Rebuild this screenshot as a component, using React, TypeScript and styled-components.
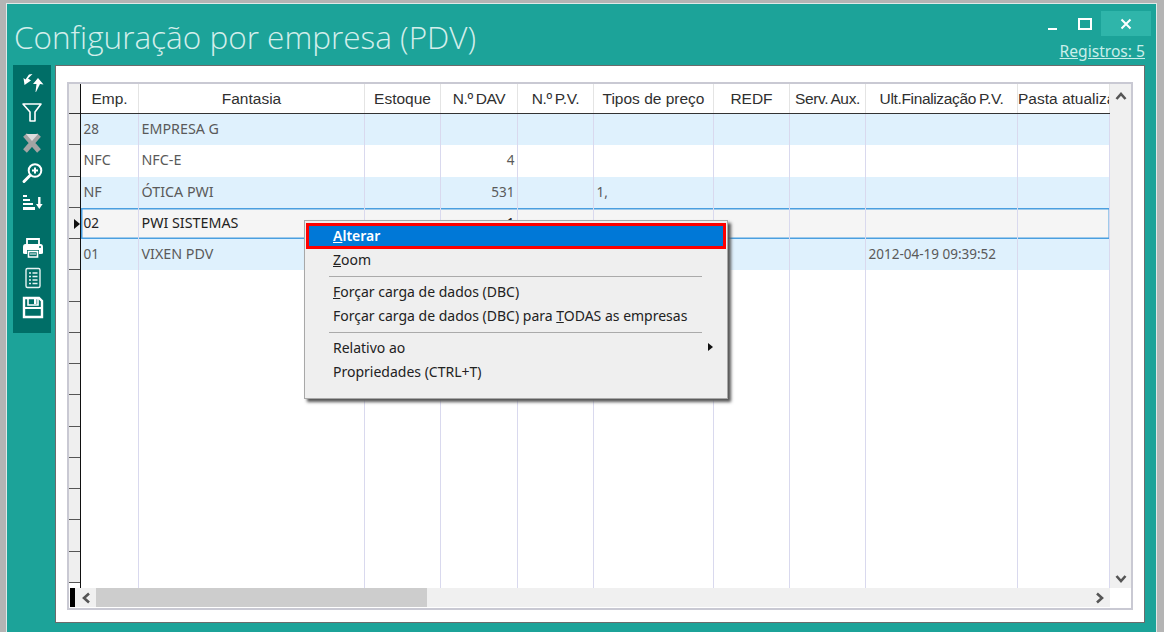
import * as React from 'react'
import styled, {createGlobalStyle} from 'styled-components'

const GlobalStyle = createGlobalStyle`
  html, body {
    margin: 0;
    padding: 0;
    background: #b4b4b4;
    overflow: hidden;
  }
`

const Page = styled.div`
  position: relative;
  width: 1164px;
  height: 632px;
  padding: 3px 0 0 6px;
  box-sizing: border-box;
  font-family: 'Noto Sans', sans-serif;
`

const Window = styled.div`
  width: 1151px;
  height: 629px;
  box-sizing: border-box;
  background: #1ca399;
  border: 1px solid #dfe9e8;
  border-bottom: 0;
  display: flex;
  flex-direction: column;
`

const TitleBar = styled.div`
  height: 61px;
  display: flex;
  justify-content: space-between;
`

const Title = styled.h1`
  margin: 11px 0 0 7px;
  font-family: 'Open Sans', sans-serif;
  font-weight: 300;
  font-size: 31.5px;
  line-height: 44px;
  color: #d3eeeb;
  white-space: nowrap;
`

const TitleRight = styled.div`
  display: flex;
  flex-direction: column;
  align-items: flex-end;
  padding: 7px 5px 0 0;
`

const WindowControls = styled.div`
  display: flex;
  align-items: center;
  height: 25px;
`

const WinButton = styled.div<{$close?: boolean}>`
  width: ${p => (p.$close ? '50px' : '32px')};
  height: 25px;
  display: flex;
  align-items: center;
  justify-content: center;
  background: ${p => (p.$close ? '#2fb5aa' : 'transparent')};
`

const RecordsLink = styled.a`
  margin: 5px 6px 0 0;
  font-size: 15.6px;
  line-height: 20px;
  color: #c9eeea;
  text-decoration: underline;
`

const Body = styled.div`
  display: flex;
  align-items: flex-start;
  padding-left: 6px;
  gap: 4px;
`

const Toolbar = styled.div`
  width: 38px;
  height: 268px;
  background: #006e67;
  display: flex;
  flex-direction: column;
  align-items: center;
  padding-top: 3px;
  box-sizing: border-box;
`

const ToolButton = styled.div<{$gap?: boolean}>`
  width: 38px;
  height: 30px;
  flex: none;
  margin-top: ${p => (p.$gap ? '15px' : '0')};
  display: flex;
  align-items: center;
  justify-content: center;
`

const Panel = styled.div`
  width: 1090px;
  height: 558px;
  box-sizing: border-box;
  background: #fff;
  border: 1px solid #6b6b6b;
  padding: 16px 11px 12px;
`

const GridBox = styled.div`
  height: 528px;
  box-sizing: border-box;
  border: 2px solid #c9c9d3;
  display: flex;
  flex-direction: column;
  background: #fff;
`

const GridMain = styled.div`
  flex: none;
  height: 504px;
  display: flex;
  overflow: hidden;
`

const Indicators = styled.div`
  width: 12px;
  flex: none;
  box-sizing: border-box;
  border-right: 1.5px solid #111;
  display: flex;
  flex-direction: column;
`

const IndicatorHead = styled.div`
  height: 30px;
  flex: none;
  box-sizing: border-box;
  background: #efefef;
  border-bottom: 1px solid #333;
`

const IndicatorCell = styled.div<{$current?: boolean}>`
  height: 31.27px;
  flex: none;
  box-sizing: border-box;
  background: #efefef;
  border-bottom: 1px solid #555;
  position: relative;
  ${p =>
    p.$current &&
    `&::after {
      content: '';
      position: absolute;
      right: 0;
      top: 11px;
      border-left: 6px solid #111;
      border-top: 5px solid transparent;
      border-bottom: 5px solid transparent;
    }`}
`

const DataArea = styled.div`
  width: 1029px;
  flex: none;
  overflow: hidden;
`

const columns = '58px 226px 76px 77px 76px 120px 76px 76px 152px 92px'

const HeaderRow = styled.div`
  height: 30px;
  box-sizing: border-box;
  display: grid;
  grid-template-columns: ${columns};
  border-bottom: 1px solid #333;
`

const HeaderCell = styled.div<{$tight?: boolean}>`
  box-sizing: border-box;
  border-right: 1px solid #e4e4e4;
  font-family: 'Liberation Sans', sans-serif;
  font-size: 15.5px;
  line-height: 29px;
  color: #2f2f2f;
  text-align: center;
  white-space: nowrap;
  overflow: hidden;
  ${p => p.$tight && 'letter-spacing: -0.35px; word-spacing: -1px;'}
`

const Row = styled.div<{$alt?: boolean; $selected?: boolean}>`
  height: 31.27px;
  box-sizing: border-box;
  display: grid;
  grid-template-columns: ${columns};
  background: ${p => (p.$selected ? '#f5f5f5' : p.$alt ? '#dff1fd' : '#fff')};
  color: ${p => (p.$selected ? '#222' : '#5a5a5a')};
  ${p => p.$selected && 'box-shadow: inset 0 0 0 1.5px #4a9fe0;'}
`

const Cell = styled.div<{$right?: boolean; $numeric?: boolean}>`
  box-sizing: border-box;
  border-right: 1px solid #d9d9ee;
  padding: 0 2.5px;
  font-size: ${p => (p.$numeric ? '13.5px' : '14.3px')};
  line-height: 30px;
  text-align: ${p => (p.$right ? 'right' : 'left')};
  white-space: nowrap;
  overflow: hidden;
`

const VScroll = styled.div`
  width: 21px;
  flex: none;
  background: #f0f0f0;
  display: flex;
  flex-direction: column;
  justify-content: space-between;
  align-items: center;
  padding: 7px 0 4px;
  box-sizing: border-box;
`

const HScrollRow = styled.div`
  height: 20px;
  flex: none;
  display: flex;
`

const Blocker = styled.div`
  width: 6px;
  flex: none;
  background: #fff;
  padding: 0 1px;
  box-sizing: border-box;
  &::before {
    content: '';
    display: block;
    width: 5px;
    height: 19px;
    background: #000;
  }
`

const HTrack = styled.div`
  flex: 1;
  height: 19px;
  background: #f0f0f0;
  display: flex;
  align-items: center;
`

const ArrowBtn = styled.div`
  width: 21px;
  flex: none;
  display: flex;
  justify-content: center;
`

const Thumb = styled.div`
  width: 331px;
  height: 19px;
  background: #cdcdcd;
`

const Spacer = styled.div`
  flex: 1;
`

const Corner = styled.div`
  width: 21px;
  flex: none;
  background: #fff;
`

const Menu = styled.div`
  position: absolute;
  left: 304px;
  top: 220px;
  width: 424px;
  height: 179px;
  box-sizing: border-box;
  background: #efefef;
  border: 1px solid #a8a8a8;
  box-shadow: 3px 3px 3px #555;
  padding-top: 3px;
  font-size: 14px;
  color: #222;
`

const MenuItem = styled.div<{$active?: boolean}>`
  height: 24px;
  line-height: 24px;
  margin: 0 2px;
  padding-left: 26px;
  position: relative;
  white-space: nowrap;
  ${p =>
    p.$active &&
    `background: #0078d7;
     color: #fff;
     font-weight: 600;
     box-shadow: 0 0 0 1px #f00, inset 0 0 0 2px #f00;`}
`

const MenuSep = styled.div`
  height: 1px;
  margin: 3.5px 25px 3.5px 24px;
  background: #aaa;
`

const SubArrow = styled.span`
  position: absolute;
  right: 12px;
  top: 7px;
  border-left: 5px solid #111;
  border-top: 4.5px solid transparent;
  border-bottom: 4.5px solid transparent;
`

const Chevron: React.FC<{d: string}> = ({d}) => (
  <svg width="12" height="10" viewBox="0 0 12 10">
    <path d={d} fill="none" stroke="#555" strokeWidth="2.6" />
  </svg>
)

const ico = {width: 24, height: 24, viewBox: '0 0 24 24'}

const RefreshIcon = () => (
  <svg {...ico}>
    <path d="M12.5 3 L8 7.5 L11 9.5 L4.5 14 L3.5 7 L5.5 8.5 L9 3.5 Z" fill="#fff" />
    <path d="M18 7 L23.5 13.5 L20 13 L16 21 L15.5 21 L16.5 13 L13 13 Z" fill="#fff" />
  </svg>
)

const FilterIcon = () => (
  <svg {...ico}>
    <path d="M3 3 H21 L15 11 V20 H10 V11 Z" fill="none" stroke="#fff" strokeWidth="1.6" strokeLinejoin="round" />
  </svg>
)

const ClearFilterIcon = () => (
  <svg {...ico}>
    <path d="M5 4 L19 20 M19 4 L5 20" stroke="#a4a4a4" strokeWidth="5" />
    <path d="M6 3 H18 L12 10 Z" fill="#dedede" />
  </svg>
)

const ZoomIcon = () => (
  <svg {...ico}>
    <circle cx="15" cy="9.5" r="6.3" fill="none" stroke="#fff" strokeWidth="2" />
    <path d="M12 9.5 H18 M15 6.5 V12.5" stroke="#fff" strokeWidth="2" />
    <path d="M10 14.5 L4 20.5" stroke="#fff" strokeWidth="3" strokeLinecap="round" />
  </svg>
)

const SortIcon = () => (
  <svg {...ico}>
    <path d="M3 4 H7 V6 H3 Z M3 8 H10 V10 H3 Z M3 12 H13 V14 H3 Z M3 16 H15 V19 H3 Z" fill="#fff" />
    <path d="M19.3 6 V14" stroke="#fff" strokeWidth="2.4" />
    <path d="M16 13 H22.6 L19.3 18 Z" fill="#fff" />
  </svg>
)

const PrintIcon = () => (
  <svg {...ico}>
    <path d="M7 9 V3 H19 V9 Z" fill="none" stroke="#fff" strokeWidth="1.8" />
    <path d="M5.5 8 H20.5 Q23 8 23 11 V17 Q23 18 21 18 H19 V14 H7 V18 H5 Q3 18 3 17 V11 Q3 8 5.5 8 Z" fill="#fff" />
    <path d="M8.5 15.5 H17.5 V21 H8.5 Z" fill="none" stroke="#fff" strokeWidth="1.6" />
    <path d="M10 18 H16" stroke="#fff" strokeWidth="1" />
    <circle cx="20" cy="11" r="1" fill="#006e67" />
  </svg>
)

const ListIcon = () => (
  <svg {...ico}>
    <rect x="6" y="2.5" width="14" height="19" rx="1.5" fill="none" stroke="#e6f4f3" strokeWidth="1.4" />
    <path d="M9 7 H11 M9 10.5 H11 M9 14 H11 M9 17.5 H11 M12.5 7 H17.5 M12.5 10.5 H17.5 M12.5 14 H17.5 M12.5 17.5 H17.5" stroke="#e6f4f3" strokeWidth="1.6" />
  </svg>
)

const SaveIcon = () => (
  <svg {...ico}>
    <path d="M4 2 H19 L22 5 V21 H4 Z" fill="none" stroke="#fff" strokeWidth="2.4" />
    <path d="M8 2 H18 V9 H8 Z" fill="none" stroke="#fff" strokeWidth="1.6" />
    <path d="M14 3 H16.5 V8 H14 Z" fill="#fff" />
    <path d="M4 11 H22 V13 H4 Z" fill="#fff" />
  </svg>
)

const tightHeaders = ['N.º DAV', 'N.º P.V.', 'Serv. Aux.', 'Ult.Finalização P.V.']
const headers = ['Emp.', 'Fantasia', 'Estoque', 'N.º DAV', 'N.º P.V.', 'Tipos de preço', 'REDF', 'Serv. Aux.', 'Ult.Finalização P.V.', 'Pasta atualização']

type RowData = {emp?: string; name?: string; dav?: string; tipos?: string; ult?: string}

const rows: RowData[] = [
  {emp: '28', name: 'EMPRESA G'},
  {emp: 'NFC', name: 'NFC-E', dav: '4'},
  {emp: 'NF', name: 'ÓTICA PWI', dav: '531', tipos: '1,'},
  {emp: '02', name: 'PWI SISTEMAS', dav: '1'},
  {emp: '01', name: 'VIXEN PDV', ult: '2012-04-19 09:39:52'},
  ...Array.from({length: 11}, () => ({})),
]

export default function App() {
  return (
    <Page>
      <GlobalStyle />
      <Window>
        <TitleBar>
          <Title>Configuração por empresa (PDV)</Title>
          <TitleRight>
            <WindowControls>
              <WinButton>
                <svg width="12" height="12" viewBox="0 0 12 12"><path d="M1 11 H10" stroke="#fff" strokeWidth="2" /></svg>
              </WinButton>
              <WinButton>
                <svg width="16" height="14" viewBox="0 0 16 14"><path d="M2 2 H14 V12 H2 Z" fill="none" stroke="#fff" strokeWidth="2" /></svg>
              </WinButton>
              <WinButton $close>
                <svg width="12" height="12" viewBox="0 0 12 12"><path d="M1.5 1.5 L10.5 10.5 M10.5 1.5 L1.5 10.5" stroke="#fff" strokeWidth="2" /></svg>
              </WinButton>
            </WindowControls>
            <RecordsLink>Registros: 5</RecordsLink>
          </TitleRight>
        </TitleBar>
        <Body>
          <Toolbar>
            <ToolButton><RefreshIcon /></ToolButton>
            <ToolButton><FilterIcon /></ToolButton>
            <ToolButton><ClearFilterIcon /></ToolButton>
            <ToolButton><ZoomIcon /></ToolButton>
            <ToolButton><SortIcon /></ToolButton>
            <ToolButton $gap><PrintIcon /></ToolButton>
            <ToolButton><ListIcon /></ToolButton>
            <ToolButton><SaveIcon /></ToolButton>
          </Toolbar>
          <Panel>
            <GridBox>
              <GridMain>
                <Indicators>
                  <IndicatorHead />
                  {Array.from({length: 15}, (_, i) => (
                    <IndicatorCell key={i} $current={i === 3} />
                  ))}
                </Indicators>
                <DataArea>
                  <HeaderRow>
                    {headers.map(h => <HeaderCell key={h} $tight={tightHeaders.includes(h)}>{h}</HeaderCell>)}
                  </HeaderRow>
                  {rows.map((r, i) => (
                    <Row key={i} $alt={i < 5 && i % 2 === 0} $selected={i === 3}>
                      <Cell $numeric={/^\d+$/.test(r.emp || '')}>{r.emp}</Cell>
                      <Cell>{r.name}</Cell>
                      <Cell />
                      <Cell $right $numeric>{r.dav}</Cell>
                      <Cell />
                      <Cell $numeric>{r.tipos}</Cell>
                      <Cell />
                      <Cell />
                      <Cell $numeric>{r.ult}</Cell>
                      <Cell />
                    </Row>
                  ))}
                </DataArea>
                <VScroll>
                  <Chevron d="M1.5 8 L6 3 L10.5 8" />
                  <Chevron d="M1.5 2 L6 7 L10.5 2" />
                </VScroll>
              </GridMain>
              <HScrollRow>
                <Blocker />
                <HTrack>
                  <ArrowBtn><svg width="10" height="12" viewBox="0 0 10 12"><path d="M8 1.5 L3 6 L8 10.5" fill="none" stroke="#555" strokeWidth="2.6" /></svg></ArrowBtn>
                  <Thumb />
                  <Spacer />
                  <ArrowBtn><svg width="10" height="12" viewBox="0 0 10 12"><path d="M2 1.5 L7 6 L2 10.5" fill="none" stroke="#555" strokeWidth="2.6" /></svg></ArrowBtn>
                </HTrack>
                <Corner />
              </HScrollRow>
            </GridBox>
          </Panel>
        </Body>
      </Window>
      <Menu>
        <MenuItem $active><u>A</u>lterar</MenuItem>
        <MenuItem><u>Z</u>oom</MenuItem>
        <MenuSep />
        <MenuItem><u>F</u>orçar carga de dados (DBC)</MenuItem>
        <MenuItem>Forçar carga de dados (DBC) para <u>T</u>ODAS as empresas</MenuItem>
        <MenuSep />
        <MenuItem>Relativo ao<SubArrow /></MenuItem>
        <MenuItem>Propriedades (CTRL+T)</MenuItem>
      </Menu>
    </Page>
  )
}
